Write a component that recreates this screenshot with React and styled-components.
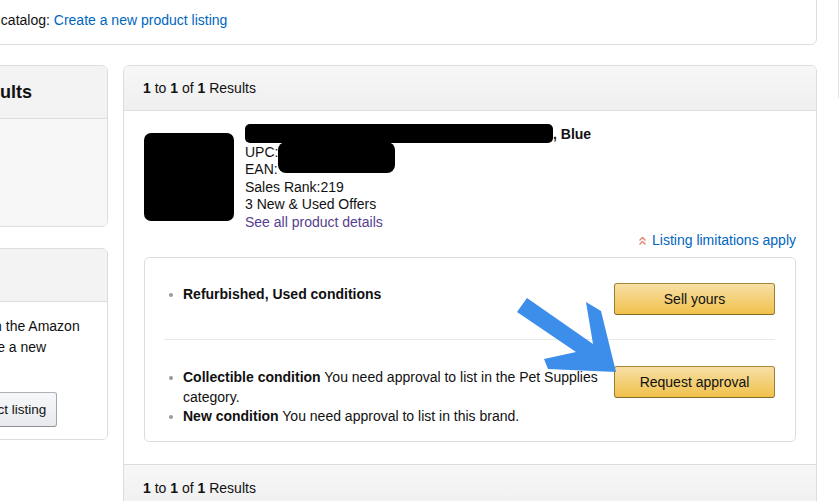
import React from "react";
import styled, { createGlobalStyle } from "styled-components";

const GlobalStyle = createGlobalStyle`
  html, body {
    margin: 0;
    padding: 0;
    background: #fff;
    overflow: hidden;
  }
  body {
    font-family: "Liberation Sans", Arial, sans-serif;
    font-size: 14px;
    color: #111;
  }
`;

const Root = styled.div`
  display: flow-root;
  position: relative;
  width: 840px;
  height: 501px;
  overflow: hidden;
`;

const Page = styled.div`
  width: 973px;
  margin: -5px 0 0 -156px;
`;

const TopCard = styled.div`
  border: 1px solid #ddd;
  border-radius: 6px;
  padding: 14px 15px;
  line-height: 20px;
  white-space: nowrap;
`;

const Link = styled.a`
  color: ${(p) => (p.visited ? "#56408d" : "#0066c0")};
  text-decoration: none;
  cursor: pointer;
`;

const Columns = styled.div`
  display: grid;
  grid-template-columns: 264px 694px;
  gap: 15px;
  margin-top: 20px;
  align-items: start;
`;

const Sidebar = styled.div`
  display: flex;
  flex-direction: column;
  gap: 21px;
`;

const SidePanel = styled.div`
  border: 1px solid #ddd;
  border-radius: 6px;
  overflow: hidden;
`;

const SideHeader = styled.div`
  height: 52px;
  display: flex;
  align-items: center;
  padding: 0 23px 0 27px;
  background: #f3f3f3;
  border-bottom: 1px solid #ddd;
  font-size: 18px;
  font-weight: 700;
  white-space: nowrap;
`;

const SideBody = styled.div`
  background: ${(p) => (p.grey ? "#f7f7f7" : "#fff")};
  height: ${(p) => (p.grey ? "107px" : "auto")};
  padding: ${(p) => (p.grey ? "0" : "14px 23px 12px")};
  line-height: 21px;
  white-space: nowrap;
`;

const SideButton = styled.button`
  display: block;
  margin-top: 34px;
  height: 35px;
  padding: 0 10px;
  font-family: inherit;
  font-size: 13.5px;
  color: #111;
  background: linear-gradient(#f7f8fa, #e7e9ec);
  border: 1px solid;
  border-color: #adb1b8 #a2a6ac #8d9096;
  border-radius: 3px;
`;

const ResultsCard = styled.div`
  border: 1px solid #ddd;
  border-radius: 6px;
  overflow: hidden;
`;

const ResultsBar = styled.div`
  height: ${(p) => p.h}px;
  display: flex;
  align-items: center;
  padding: 0 19px;
  background: linear-gradient(#f7f7f7, #efefef);
  ${(p) => (p.bottom ? "border-top: 1px solid #ddd;" : "border-bottom: 1px solid #ddd;")}
  white-space: nowrap;
`;

const ResultsBody = styled.div`
  padding: 15px 20px 22px;
`;

const ProductRow = styled.div`
  display: flex;
  gap: 11px;
`;

const Thumb = styled.div`
  width: 90px;
  height: 88px;
  margin-top: 7px;
  background: #000;
  border-radius: 7px;
  flex: none;
`;

const ProductInfo = styled.div`
  line-height: 17.5px;
  white-space: nowrap;
`;

const Title = styled.div`
  font-weight: 700;
`;

const Redact = styled.span`
  display: inline-block;
  background: #000;
  width: ${(p) => p.w}px;
  height: ${(p) => p.h}px;
  border-radius: ${(p) => p.r}px;
  vertical-align: top;
  margin: -2px 0 ${(p) => 19.5 - p.h}px;
`;

const Limits = styled.div`
  margin-top: 1px;
  line-height: 17.5px;
  display: flex;
  justify-content: flex-end;
  align-items: center;
  gap: 5px;
`;

const InnerCard = styled.div`
  margin-top: 7px;
  border: 1px solid #ddd;
  border-radius: 5px;
  padding: 0 20px 0 19px;
`;

const ConditionRow = styled.div`
  display: flex;
  align-items: flex-start;
  gap: 10px;
  padding: ${(p) => (p.last ? "26px 0 14px" : "25px 0 24px")};
  ${(p) => (p.last ? "" : "border-bottom: 1px solid #e7e7e7;")}
`;

const ConditionList = styled.ul`
  flex: 1;
  margin: 2.5px 0 0;
  padding: 0;
  list-style: none;
  line-height: 19.5px;
`;

const Condition = styled.li`
  position: relative;
  padding-left: 19px;

  &::before {
    content: "";
    position: absolute;
    left: 5px;
    top: 8px;
    width: 4px;
    height: 4px;
    border-radius: 50%;
    background: #9a9a9a;
  }

  b {
    font-weight: 700;
  }
`;

const YellowButton = styled.button`
  flex: none;
  width: 161px;
  height: 32px;
  font-family: inherit;
  font-size: 14px;
  color: #111;
  background: linear-gradient(#f7dfa5, #f0c14b);
  border: 1px solid;
  border-color: #a88734 #9c7e31 #846a29;
  border-radius: 3px;
`;

const Overlay = styled.svg`
  position: absolute;
  left: 0;
  top: 0;
  pointer-events: none;
`;

const ScrollEdge = styled.div`
  position: absolute;
  left: 838px;
  top: 0;
  width: 1px;
  height: 98px;
  background: #e2e2e2;
`;

const Count = () => (
  <span>
    <b>1</b> to <b>1</b> of <b>1</b> Results
  </span>
);

const LimitIcon = () => (
  <svg width="9" height="10" viewBox="0 0 9 10">
    <path d="M1.5 4.5 L4.5 1.5 L7.5 4.5 M1.5 8.5 L4.5 5.5 L7.5 8.5" fill="none" stroke="#e2826e" strokeWidth="1.4" />
  </svg>
);

export default function App() {
  return (
    <>
      <GlobalStyle />
      <Root>
        <Page>
          <TopCard>
            If the item is not in the catalog: <Link>Create a new product listing</Link>
          </TopCard>
          <Columns>
            <Sidebar>
              <SidePanel>
                <SideHeader>My Search Results</SideHeader>
                <SideBody grey />
              </SidePanel>
              <SidePanel>
                <SideHeader>Add a Product</SideHeader>
                <SideBody>
                  If the product is not in the Amazon
                  <br />
                  catalog, please create a new
                  <SideButton>Create a new product listing</SideButton>
                </SideBody>
              </SidePanel>
            </Sidebar>

            <ResultsCard>
              <ResultsBar h={44}>
                <Count />
              </ResultsBar>
              <ResultsBody>
                <ProductRow>
                  <Thumb />
                  <ProductInfo>
                    <Title>
                      <Redact w={308} h={19} r={5} />, Blue
                    </Title>
                    <div>
                      UPC:<Redact w={117} h={31} r={8} />
                    </div>
                    <div>EAN:</div>
                    <div>Sales Rank:219</div>
                    <div>3 New &amp; Used Offers</div>
                    <Link visited>See all product details</Link>
                  </ProductInfo>
                </ProductRow>
                <Limits>
                  <LimitIcon />
                  <Link>Listing limitations apply</Link>
                </Limits>
                <InnerCard>
                  <ConditionRow>
                    <ConditionList>
                      <Condition>
                        <b>Refurbished, Used conditions</b>
                      </Condition>
                    </ConditionList>
                    <YellowButton>Sell yours</YellowButton>
                  </ConditionRow>
                  <ConditionRow last>
                    <ConditionList>
                      <Condition>
                        <b>Collectible condition</b> You need approval to list in the Pet Supplies category.
                      </Condition>
                      <Condition>
                        <b>New condition</b> You need approval to list in this brand.
                      </Condition>
                    </ConditionList>
                    <YellowButton>Request approval</YellowButton>
                  </ConditionRow>
                </InnerCard>
              </ResultsBody>
              <ResultsBar h={46} bottom>
                <Count />
              </ResultsBar>
            </ResultsCard>
          </Columns>
        </Page>

        <ScrollEdge />
        <Overlay width="840" height="501" viewBox="0 0 840 501">
          <polygon
            points="527,298 593,344 586,302 601,311 616,372 548,369 544,359 576,352 517,312"
            fill="#3d8eea"
          />
        </Overlay>
      </Root>
    </>
  );
}
